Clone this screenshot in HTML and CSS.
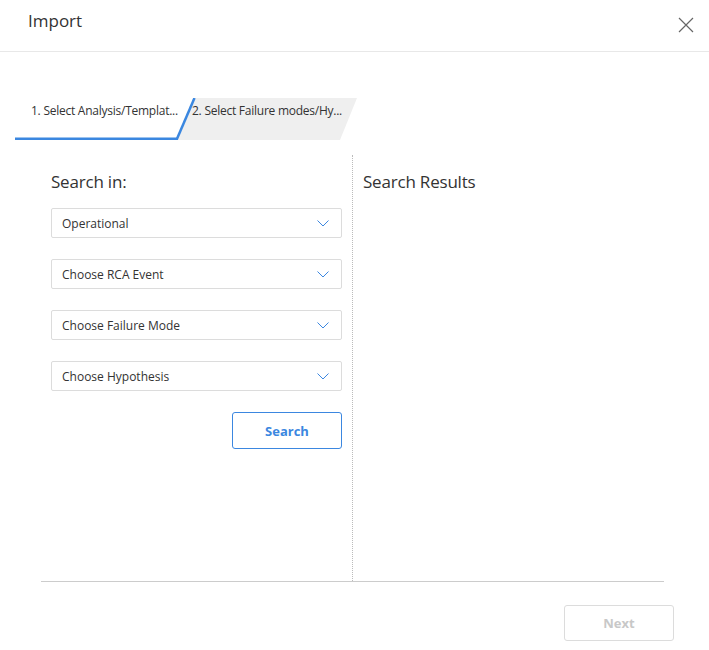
FILE: index.html
```html
<!DOCTYPE html>
<html>
<head>
<meta charset="utf-8">
<link rel="stylesheet" href="styles.css">
</head>
<body>
<div class="dialog">
  <div class="header">
    <div class="title">Import</div>
    <button class="close" aria-label="Close">
      <svg width="16" height="16" viewBox="0 0 16 16"><path d="M1 1 L15 15 M15 1 L1 15" stroke="#666" stroke-width="1.2" fill="none"/></svg>
    </button>
  </div>

  <div class="wizard">
    <svg class="wizard-bg" width="345" height="42" viewBox="0 0 345 42">
      <polygon points="179,0 342,0 325,42 161,42" fill="#efefef"/>
      <rect x="0" y="39.5" width="162" height="2.5" fill="#3b87e0"/>
      <line x1="161.5" y1="42" x2="179.5" y2="0" stroke="#3b87e0" stroke-width="2.5"/>
    </svg>
    <div class="tab tab-active">1. Select Analysis/Templat...</div>
    <div class="tab tab-next">2. Select Failure modes/Hy...</div>
  </div>

  <div class="content">
    <div class="col col-left">
      <div class="heading">Search in:</div>
      <div class="select"><span>Operational</span><svg width="12" height="7" viewBox="0 0 12 7"><path d="M0.5 0.5 L6 6 L11.5 0.5" stroke="#3b87e0" stroke-width="1" fill="none"/></svg></div>
      <div class="select"><span>Choose RCA Event</span><svg width="12" height="7" viewBox="0 0 12 7"><path d="M0.5 0.5 L6 6 L11.5 0.5" stroke="#3b87e0" stroke-width="1" fill="none"/></svg></div>
      <div class="select"><span>Choose Failure Mode</span><svg width="12" height="7" viewBox="0 0 12 7"><path d="M0.5 0.5 L6 6 L11.5 0.5" stroke="#3b87e0" stroke-width="1" fill="none"/></svg></div>
      <div class="select"><span>Choose Hypothesis</span><svg width="12" height="7" viewBox="0 0 12 7"><path d="M0.5 0.5 L6 6 L11.5 0.5" stroke="#3b87e0" stroke-width="1" fill="none"/></svg></div>
      <div class="actions"><button class="btn btn-primary">Search</button></div>
    </div>
    <div class="col col-right">
      <div class="heading">Search Results</div>
    </div>
  </div>

  <div class="footer">
    <button class="btn btn-disabled" disabled>Next</button>
  </div>
</div>
</body>
</html>
```

FILE: styles.css
```css
* { box-sizing: border-box; }
body {
  margin: 0;
  background: #fff;
  font-family: "Open Sans", "Noto Sans", sans-serif;
  color: #333;
}
.dialog {
  width: 709px;
  height: 650px;
  background: #fff;
}
.header {
  height: 52px;
  border-bottom: 1px solid #e8e8e8;
  display: flex;
  justify-content: space-between;
  align-items: flex-start;
  padding: 0 15px 0 28px;
}
.title {
  font-size: 17px;
  line-height: 22px;
  margin-top: 10px;
  color: #333;
}
.close {
  border: 0;
  background: none;
  padding: 0;
  margin-top: 17px;
  width: 16px;
  height: 16px;
  cursor: pointer;
}
.close svg { display: block; }

.wizard {
  position: relative;
  margin: 46px 0 0 15px;
  height: 42px;
  width: 345px;
  display: flex;
}
.wizard-bg {
  position: absolute;
  left: 0;
  top: 0;
}
.tab {
  position: relative;
  font-size: 12px;
  line-height: 16px;
  letter-spacing: -0.25px;
  padding-top: 5px;
  white-space: nowrap;
  color: #333;
}
.tab-active {
  margin-left: 16px;
  width: 161px;
}
.tab-next {
  margin-left: 0;
  width: 160px;
}

.content {
  display: flex;
  margin: 15px 45px 0 41px;
  height: 427px;
  border-bottom: 1px solid #ccc;
}
.col {
  padding: 16px 10px 0;
}
.col-left {
  width: 312px;
  border-right: 1px dotted #bbb;
}
.col-right {
  flex: 1;
}
.heading {
  font-size: 17px;
  line-height: 22px;
  color: #333;
  margin-bottom: 15px;
  letter-spacing: -0.2px;
}
.select {
  height: 30px;
  border: 1px solid #dcdcdc;
  border-radius: 2px;
  display: flex;
  align-items: center;
  justify-content: space-between;
  padding: 0 12px 0 10px;
  font-size: 12px;
  color: #333;
  margin-bottom: 21px;
}
.select svg { display: block; }
.actions {
  display: flex;
  justify-content: flex-end;
}
.btn {
  width: 110px;
  height: 37px;
  border-radius: 3px;
  background: #fff;
  font-family: inherit;
  font-size: 13px;
  font-weight: 700;
}
.btn-primary {
  border: 1px solid #3b87e0;
  color: #3b87e0;
}
.footer {
  display: flex;
  justify-content: flex-end;
  padding: 23px 35px 0 0;
}
.btn-disabled {
  height: 36px;
  border: 1px solid #dcdcdc;
  color: #c8c8c8;
}
```
